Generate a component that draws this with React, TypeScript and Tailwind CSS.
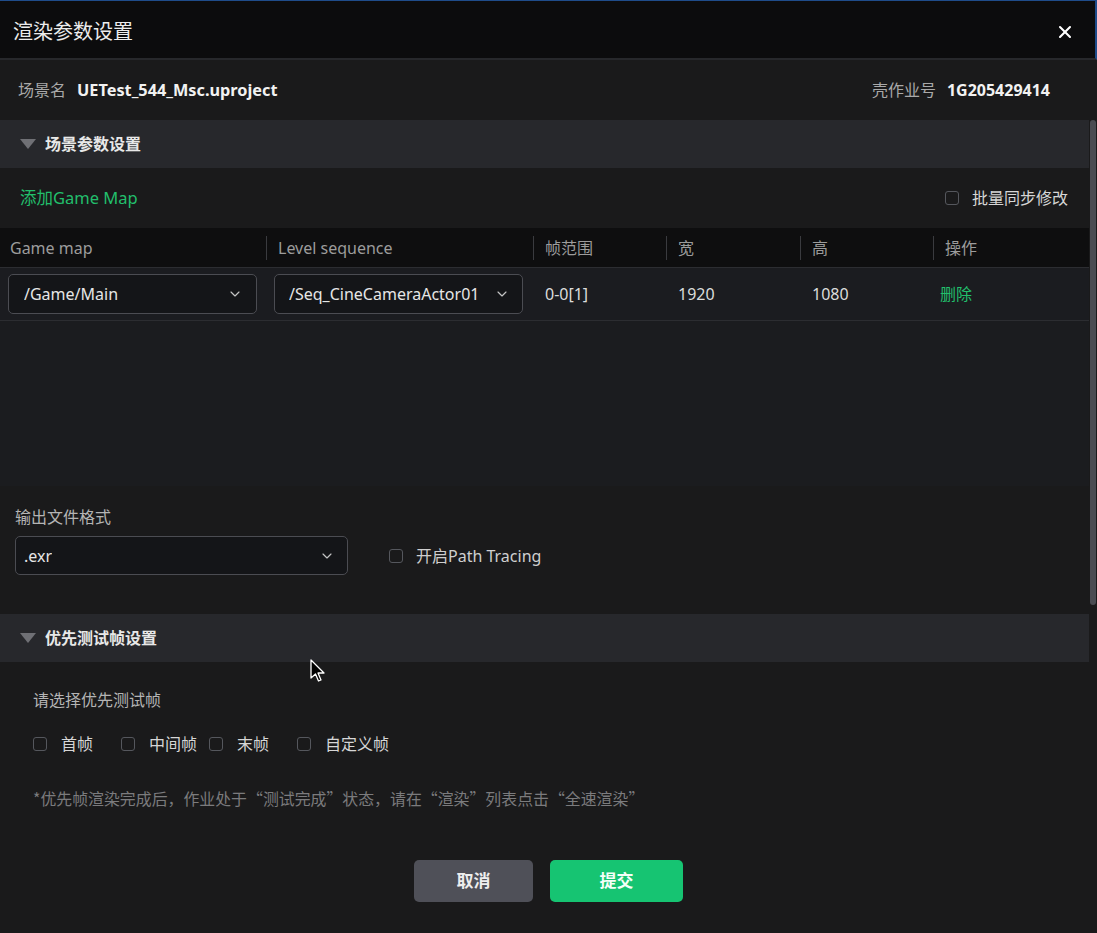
import { ChevronDown, X } from 'lucide-react';

const font = "font-['Noto_Sans','Noto_Sans_CJK_SC',sans-serif]";

function Checkbox() {
  return <span className="size-[14px] shrink-0 rounded-[3px] border border-[#55575d]" />;
}

function Select({ value, className }: { value: string; className: string }) {
  return (
    <div
      className={`flex items-center justify-between rounded-[5px] border border-[#4b4c52] bg-[#141518] text-[16px] text-[#e6e6e6] ${className}`}
    >
      <span className="truncate">{value}</span>
      <ChevronDown className="size-[16px] shrink-0 text-[#c4c4c4]" strokeWidth={1.75} />
    </div>
  );
}

function SectionHeader({ title }: { title: string }) {
  return (
    <div className="flex h-[48px] shrink-0 items-center gap-[9px] bg-[#27282c] pl-[20px]">
      <svg width="16" height="10" viewBox="0 0 16 10">
        <path d="M0 0 H16 L8 10 Z" fill="#6f7075" />
      </svg>
      <span className="text-[16px] font-bold text-[#e8e8e8]">{title}</span>
    </div>
  );
}

const cols = 'grid grid-cols-[266px_267px_133px_134px_133px_1fr]';

function HeadCell({ label, first }: { label: string; first?: boolean }) {
  if (first) return <div className="pl-[10px]">{label}</div>;
  return (
    <div className="flex items-center">
      <span className="h-[24px] w-px bg-[#3a3b3f]" />
      <span className="ml-[11px]">{label}</span>
    </div>
  );
}

// CJK full-width quote
function Q({ children }: { children: string }) {
  return <span className="[font-feature-settings:'fwid']">{children}</span>;
}

export default function App() {
  return (
    <div className={`relative flex h-[933px] w-[1097px] flex-col overflow-hidden bg-[#1a1a1b] ${font}`}>
      {/* Title bar */}
      <div className="flex h-[60px] shrink-0 items-center justify-between border-t border-r-2 border-b-2 border-t-[#1f4c8a] border-r-[#1f4c8a] border-b-[#27282b] bg-[#0c0c0d] pl-[13px] pr-[20px] pt-[4px]">
        <span className="text-[20px] text-[#ececec]">渲染参数设置</span>
        <X className="size-[20px] text-white" strokeWidth={2.5} />
      </div>

      {/* Scene info */}
      <div className="flex h-[60px] shrink-0 items-center justify-between pl-[18px] pr-[47px] text-[16px]">
        <div className="flex items-center gap-[11px]">
          <span className="text-[#a9a9a9]">场景名</span>
          <span className="text-[16.3px] font-bold text-[#f2f2f2]">UETest_544_Msc.uproject</span>
        </div>
        <div className="flex items-center gap-[11px]">
          <span className="text-[#a9a9a9]">壳作业号</span>
          <span className="font-bold text-[#f2f2f2]">1G205429414</span>
        </div>
      </div>

      {/* Body + scrollbar */}
      <div className="flex min-h-0 flex-1">
        <div className="flex min-w-0 flex-1 flex-col overflow-hidden">
          <SectionHeader title="场景参数设置" />

          <div className="flex h-[60px] shrink-0 items-center justify-between pl-[20px] pr-[21px] text-[16px]">
            <span className="text-[16.5px] text-[#22bf6c]">添加Game Map</span>
            <label className="flex items-center gap-[13px] text-[#d6d6d6]">
              <Checkbox />
              批量同步修改
            </label>
          </div>

          {/* Table */}
          <div className={`${cols} h-[40px] shrink-0 items-center border-b border-[#2c2d31] bg-[#0e0e0f] text-[16px] text-[#9c9c9c]`}>
            <HeadCell label="Game map" first />
            <HeadCell label="Level sequence" />
            <HeadCell label="帧范围" />
            <HeadCell label="宽" />
            <HeadCell label="高" />
            <HeadCell label="操作" />
          </div>
          <div className={`${cols} h-[53px] shrink-0 items-center border-b border-[#2c2d31] bg-[#1b1c20] text-[16px] text-[#dcdcdc]`}>
            <div className="pl-[8px] pr-[9px]">
              <Select value="/Game/Main" className="h-[40px] pl-[15px] pr-[13px]" />
            </div>
            <div className="pl-[8px] pr-[10px]">
              <Select value="/Seq_CineCameraActor01" className="h-[40px] pl-[14px] pr-[12px]" />
            </div>
            <div className="pl-[12px]">0-0[1]</div>
            <div className="pl-[12px]">1920</div>
            <div className="pl-[12px]">1080</div>
            <div className="pl-[7px] text-[#22bf6c]">删除</div>
          </div>
          <div className="h-[165px] shrink-0 bg-[#1b1c1f]" />

          {/* Output format */}
          <div className="shrink-0 pb-[39px] pl-[15px] pt-[20px]">
            <div className="mb-[8px] text-[16px] leading-[22px] text-[#b4b4b4]">输出文件格式</div>
            <div className="flex items-center">
              <Select value=".exr" className="h-[39px] w-[333px] pl-[8px] pr-[12px]" />
              <label className="ml-[41px] flex items-center gap-[13px] text-[16px] text-[#cfcfcf]">
                <Checkbox />
                开启Path Tracing
              </label>
            </div>
          </div>

          <SectionHeader title="优先测试帧设置" />

          {/* Priority frames */}
          <div className="shrink-0 pl-[33px] pt-[27px] text-[16px]">
            <div className="leading-[22px] text-[#b4b4b4]">请选择优先测试帧</div>
            <div className="mt-[22px] flex items-center text-[#d6d6d6]">
              {['首帧', '中间帧', '末帧', '自定义帧'].map((f) => (
                <label key={f} className="flex w-[88px] items-center gap-[14px] leading-[22px]">
                  <Checkbox />
                  <span className="whitespace-nowrap">{f}</span>
                </label>
              ))}
            </div>
            <div className="mt-[33px] font-['Noto_Sans_CJK_SC',sans-serif] text-[15.9px] leading-[22px] text-[#7b7b7d]">
              *优先帧渲染完成后，作业处于<Q>“</Q>测试完成<Q>”</Q>状态，请在<Q>“</Q>渲染<Q>”</Q>列表点击<Q>“</Q>全速渲染<Q>”</Q>
            </div>
          </div>

          <div className="flex shrink-0 justify-center gap-[17px] pl-[8px] pt-[50px]">
            <button className="h-[42px] w-[119px] rounded-[5px] bg-[#4f5058] text-[17px] font-bold text-[#ededed]">取消</button>
            <button className="h-[42px] w-[133px] rounded-[5px] bg-[#16c472] text-[17px] font-bold text-[#f4fff8]">提交</button>
          </div>
        </div>

        {/* Scrollbar */}
        <div className="w-[8px] shrink-0 px-[1px]">
          <div className="h-[485px] rounded-full bg-[#4a4c52]" />
        </div>
      </div>

      {/* Mouse pointer */}
      <svg className="absolute left-[310px] top-[659px]" width="16" height="24" viewBox="0 0 16 24">
        <path d="M1 1 L1 19 L5.5 15 L8.5 22 L11 21 L8 14 L14 14 Z" fill="#000" stroke="#fff" strokeWidth="1.3" strokeLinejoin="round" />
      </svg>
    </div>
  );
}
